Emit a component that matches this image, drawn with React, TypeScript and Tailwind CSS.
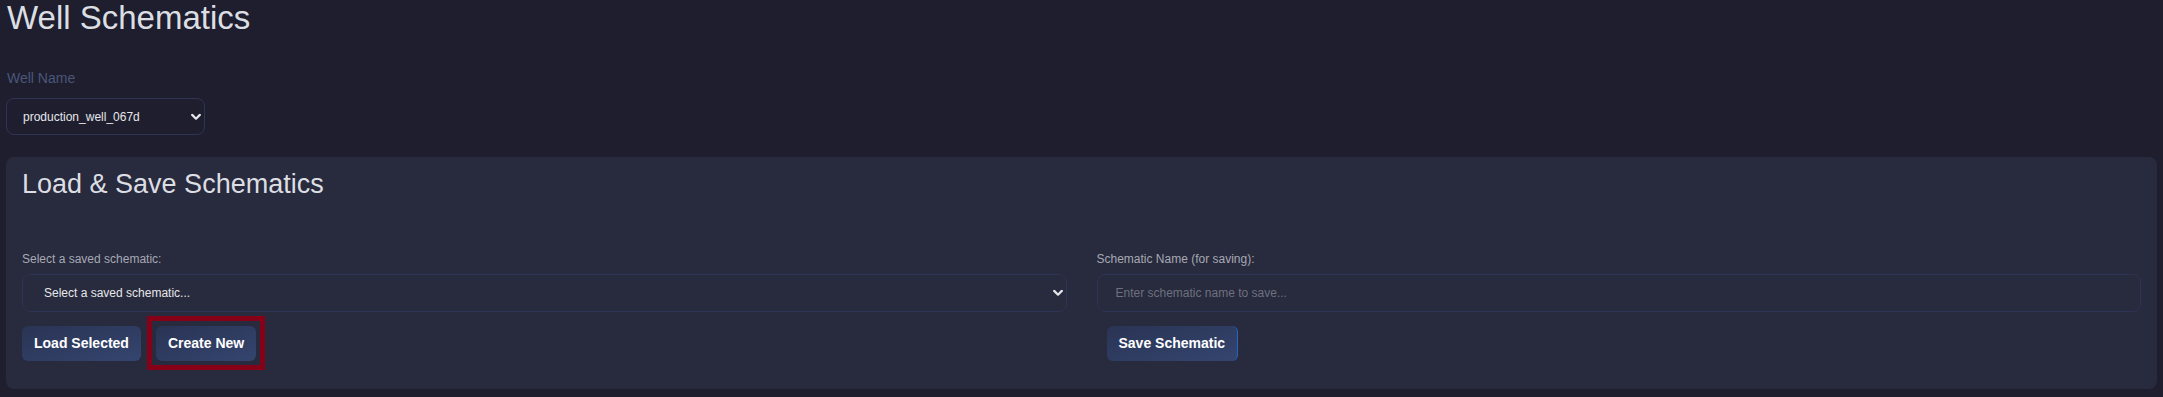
import React from "react";

function Chevron({ className }: { className?: string }) {
  return (
    <svg
      className={className}
      width="10"
      height="7"
      viewBox="0 0 10 7"
      fill="none"
      aria-hidden="true"
    >
      <polyline
        points="1.2,1.4 5,5.2 8.8,1.4"
        stroke="#e4e5ea"
        strokeWidth="2.2"
        strokeLinecap="round"
        strokeLinejoin="round"
      />
    </svg>
  );
}

export default function App() {
  return (
    <div className="min-h-screen bg-[#1e1e2e] px-[6px] font-['Liberation_Sans',Arial,sans-serif]">
      <h1 className="pl-px text-[33px] leading-[35px] font-normal text-[#dcdee3]">
        Well Schematics
      </h1>

      <div className="mt-[35px]">
        <label className="block pl-px text-[14px] leading-[16px] text-[#4b5679]">
          Well Name
        </label>
        <div className="relative mt-[12px] h-[37px] w-[199px]">
          <select
            defaultValue="production_well_067d"
            className="h-full w-full appearance-none rounded-lg border border-[#2d3454] bg-[#1e1e2e] pl-[16px] text-[12px] text-[#e6e7ea] outline-none"
          >
            <option value="production_well_067d">production_well_067d</option>
          </select>
          <Chevron className="pointer-events-none absolute right-[4px] top-1/2 -translate-y-1/2" />
        </div>
      </div>

      <section className="mt-[22px] rounded-lg bg-[#282a3d] px-[16px] pt-[12px] pb-[28px]">
        <h2 className="text-[27px] leading-[31px] font-normal text-[#dcdee3]">
          Load &amp; Save Schematics
        </h2>

        <div className="mt-[52px] grid grid-cols-2 gap-[30px]">
          <div>
            <label className="block text-[12px] leading-[14px] text-[#a6a9b4]">
              Select a saved schematic:
            </label>
            <div className="relative mt-[8px] h-[38px]">
              <select
                defaultValue=""
                className="h-full w-full appearance-none rounded-lg border border-[#2d3454] bg-[#282a3d] pl-[21px] text-[12px] text-[#e6e7ea] outline-none"
              >
                <option value="">Select a saved schematic...</option>
              </select>
              <Chevron className="pointer-events-none absolute right-[4px] top-1/2 -translate-y-1/2" />
            </div>
            <div className="mt-[14px] flex gap-[15px]">
              <button className="h-[35px] rounded-md bg-gradient-to-br from-[#2a3454] to-[#34456f] px-[12px] text-[14px] font-bold text-white">
                Load Selected
              </button>
              <div className="relative">
                <button className="h-[35px] rounded-md bg-gradient-to-br from-[#2a3454] to-[#34456f] px-[12px] text-[14px] font-bold text-white">
                  Create New
                </button>
                <div className="pointer-events-none absolute -top-[10px] -bottom-[9px] -left-[9px] -right-[9px] border-[5px] border-[#860018]" />
              </div>
            </div>
          </div>

          <div>
            <label className="block text-[12px] leading-[14px] text-[#a6a9b4]">
              Schematic Name (for saving):
            </label>
            <input
              type="text"
              placeholder="Enter schematic name to save..."
              className="mt-[8px] block h-[38px] w-full rounded-lg border border-[#2d3454] bg-[#282a3d] pl-[18px] text-[12px] text-[#e6e7ea] outline-none placeholder:text-[#6d717f]"
            />
            <div className="mt-[14px] flex">
              <button className="ml-[10px] h-[35px] rounded-md border-0 border-r border-r-[#2466c8] bg-gradient-to-br from-[#2a3454] to-[#34456f] px-[12px] text-[14px] font-bold text-white">
                Save Schematic
              </button>
            </div>
          </div>
        </div>
      </section>
    </div>
  );
}
